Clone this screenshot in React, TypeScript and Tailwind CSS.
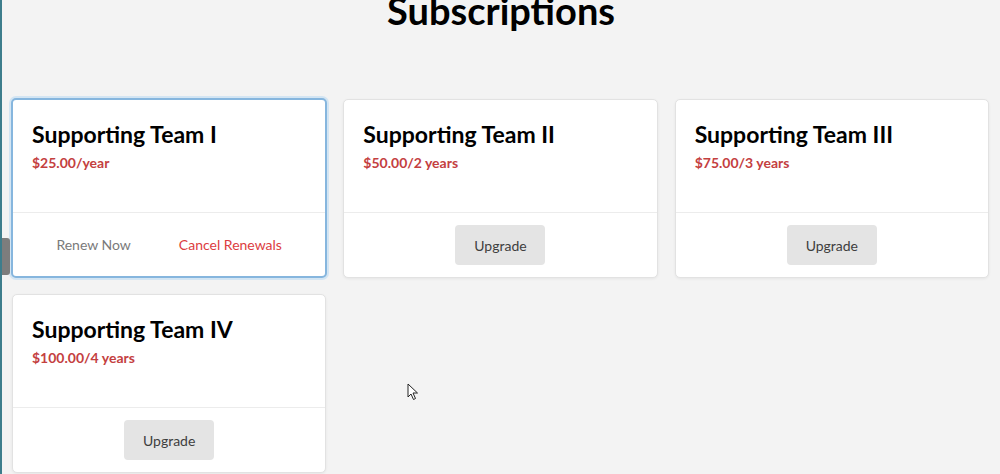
import React from "react";

interface Plan {
  name: string;
  price: string;
  current?: boolean;
}

const plans: Plan[] = [
  { name: "Supporting Team I", price: "$25.00/year", current: true },
  { name: "Supporting Team II", price: "$50.00/2 years" },
  { name: "Supporting Team III", price: "$75.00/3 years" },
  { name: "Supporting Team IV", price: "$100.00/4 years" },
];

function PlanCard({ plan }: { plan: Plan }) {
  return (
    <div
      className={
        plan.current
          ? "bg-white rounded-[5px] border-2 border-[#86b6de] ring-2 ring-[#d3e5f3] h-[180px] flex flex-col -m-px"
          : "bg-white rounded-[5px] border border-[#e2e2e2] shadow-[0_1px_3px_rgba(0,0,0,0.06)] h-[179px] flex flex-col"
      }
    >
      <div className="h-[113px] border-b border-[#ececec] pl-[19px] pr-5 pt-[19px]">
        <h2 className="text-[23px] font-bold leading-[30px] text-black">
          {plan.name}
        </h2>
        <p className="text-[14px] font-bold text-[#c4403f] leading-5 mt-[4px]">
          {plan.price}
        </p>
      </div>
      <div className="flex-1 flex items-center justify-center">
        {plan.current ? (
          <div className="flex items-center">
            <button className="px-6 py-2 text-[14px] text-[#7a7a7a]">Renew Now</button>
            <button className="px-6 py-2 text-[14px] text-[#dc3d3f]">Cancel Renewals</button>
          </div>
        ) : (
          <button className="h-10 w-[90px] rounded-[4px] bg-[#e4e4e4] text-[14px] text-[#3e3e3e]">
            Upgrade
          </button>
        )}
      </div>
    </div>
  );
}

export default function App() {
  return (
    <div
      className="relative h-[474px] overflow-hidden bg-[#f3f3f3] border-l-2 border-[#3d7d8c]"
      style={{ fontFamily: 'Lato, "Noto Sans", sans-serif' }}
    >
      <div className="absolute left-0 top-[238px] w-[8px] h-[37px] rounded-r-[3px] bg-[#7d7d7d]" />
      <h1 className="text-center text-[38px] font-bold leading-[48px] text-black -mt-[14px]">
        Subscriptions
      </h1>
      <div className="grid grid-cols-3 gap-x-[17px] gap-y-[16px] pl-[10px] pr-[11px] mt-[65px]">
        {plans.map((p) => (
          <PlanCard key={p.name} plan={p} />
        ))}
      </div>
      <svg
        className="absolute left-[405px] top-[383px]"
        width="12"
        height="18"
        viewBox="0 0 12 18"
      >
        <path
          d="M1 1 L1 14 L4 11 L6.5 16.5 L8.5 15.5 L6 10 L10.5 10 Z"
          fill="white"
          stroke="#222"
          strokeWidth="1"
          strokeLinejoin="round"
        />
      </svg>
    </div>
  );
}
